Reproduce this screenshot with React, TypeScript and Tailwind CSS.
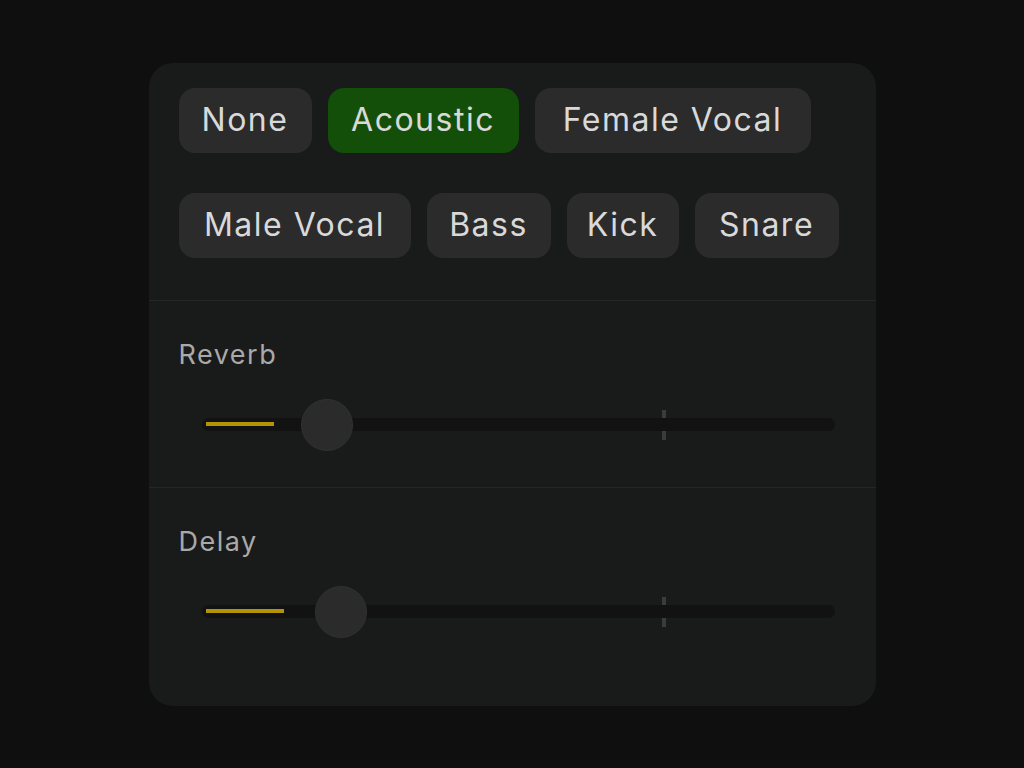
import { useState } from 'react';

const PRESETS = [
  [
    { name: 'None', w: 'w-[133px]' },
    { name: 'Acoustic', w: 'w-[191px]' },
    { name: 'Female Vocal', w: 'w-[276px]' },
  ],
  [
    { name: 'Male Vocal', w: 'w-[232px]' },
    { name: 'Bass', w: 'w-[124px]' },
    { name: 'Kick', w: 'w-[112px]' },
    { name: 'Snare', w: 'w-[144px]' },
  ],
];

interface SliderProps {
  label: string;
  fill: number;
  thumb: number;
}

function EffectSlider({ label, fill, thumb }: SliderProps) {
  return (
    <div>
      <div className="text-[27px] leading-[36px] tracking-[1.5px] text-[#a9a9a9]">{label}</div>
      <div className="relative mt-[26px] ml-[23px] mr-[11px] h-[52px] flex items-center">
        {/* tick mark behind the track */}
        <div className="absolute left-[460px] top-[11px] w-[4px] h-[30px] bg-[#3a3b3b]" />
        <div className="relative w-full h-[13px] rounded-full bg-[#121212]">
          <div
            className="absolute left-[4px] top-[4px] h-[4px] bg-[#b39408]"
            style={{ width: fill }}
          />
        </div>
        <div
          className="absolute top-0 w-[52px] h-[52px] rounded-full bg-[#2b2b2b] border border-[#303131]"
          style={{ left: thumb - 26 }}
        />
      </div>
    </div>
  );
}

export default function App() {
  const [active, setActive] = useState('Acoustic');

  return (
    <div
      className="w-full h-screen bg-[#0f0f0f] flex items-center justify-center"
      style={{ fontFamily: 'Inter, "Noto Sans", sans-serif' }}
    >
      <div className="w-[727px] h-[643px] rounded-[24px] bg-[#191a1a] flex flex-col">
        {/* Presets */}
        <div className="px-[30px] pt-[25px] pb-[42px] flex flex-col gap-[40px] border-b border-[#252727]">
          {PRESETS.map((row, i) => (
            <div key={i} className="flex gap-[16px]">
              {row.map(p => (
                <button
                  key={p.name}
                  onClick={() => setActive(p.name)}
                  className={
                    p.w +
                    ' h-[65px] flex items-center justify-center rounded-[16px] text-[32px] tracking-[1.5px] text-[#d9d9d9] ' +
                    (active === p.name ? 'bg-[#144f0a]' : 'bg-[#2b2b2b]')
                  }
                >
                  {p.name}
                </button>
              ))}
            </div>
          ))}
        </div>

        <div className="px-[30px] pt-[36px] pb-[36px] border-b border-[#252727]">
          <EffectSlider label="Reverb" fill={68} thumb={125} />
        </div>

        <div className="px-[30px] pt-[36px]">
          <EffectSlider label="Delay" fill={78} thumb={139} />
        </div>
      </div>
    </div>
  );
}
